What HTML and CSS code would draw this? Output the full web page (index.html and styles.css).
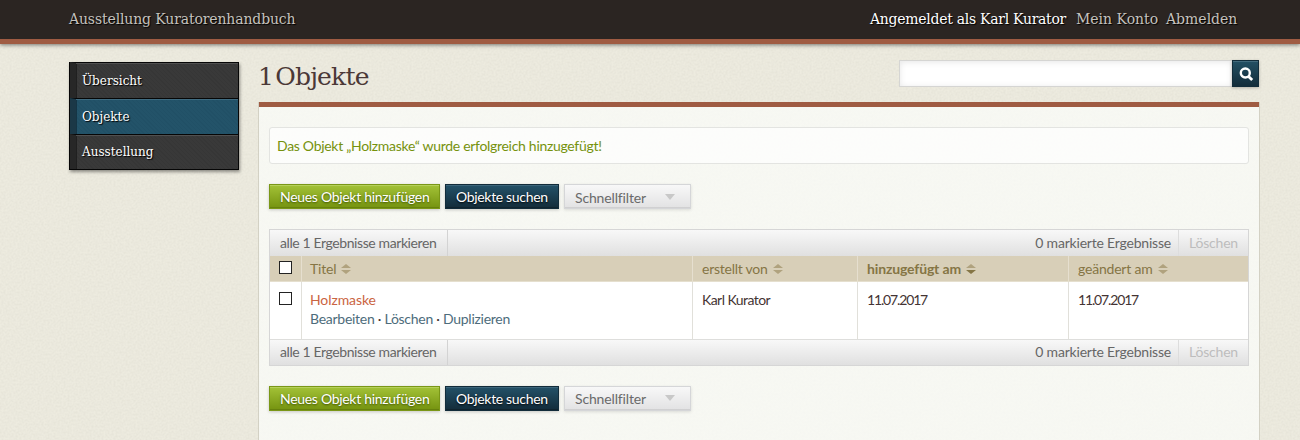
FILE: index.html
```
<!DOCTYPE html>
<html lang="de">
<head>
<meta charset="utf-8">
<title>Ausstellung Kuratorenhandbuch</title>
<link rel="stylesheet" href="styles.css">
</head>
<body>
<header class="topbar">
  <a class="site-title">Ausstellung Kuratorenhandbuch</a>
  <nav class="user-nav"><span class="user-name">Angemeldet als Karl Kurator</span><a class="account">Mein Konto</a><a class="logout">Abmelden</a></nav>
</header>
<div class="page">
  <nav class="side-nav">
    <a class="side-item"><span class="side-uebersicht">Übersicht</span></a>
    <a class="side-item active"><span class="side-objekte">Objekte</span></a>
    <a class="side-item"><span class="side-ausstellung">Ausstellung</span></a>
  </nav>
  <main class="main">
    <div class="heading-row">
      <h1 class="heading">1 Objekte</h1>
      <form class="search">
        <input class="search-input" type="text" aria-label="Suche">
        <button class="search-button" type="button" aria-label="Suchen"><svg width="15" height="15" viewBox="0 0 15 15" fill="none" stroke="#fff"><circle cx="6.3" cy="6" r="4.5" stroke-width="2.4"/><path d="M9.3 9.2L13.2 13.1" stroke-width="2.8"/></svg></button>
      </form>
    </div>
    <section class="panel">
      <div class="message"><span class="message-text">Das Objekt „Holzmaske“ wurde erfolgreich hinzugefügt!</span></div>
      <div class="actions">
        <a class="button green"><span class="label-add">Neues Objekt hinzufügen</span></a>
        <a class="button blue"><span class="label-search">Objekte suchen</span></a>
        <a class="button filter"><span class="label-filter">Schnellfilter</span><i class="caret"></i></a>
      </div>
      <div class="results">
        <div class="bulk">
          <span class="bulk-all"><span class="t-all">alle 1 Ergebnisse markieren</span></span>
          <span class="bulk-count"><span class="t-count">0 markierte Ergebnisse</span></span>
          <span class="bulk-delete"><span class="t-delete">Löschen</span></span>
        </div>
        <div class="row head">
          <div class="cell check"><i class="box"></i></div>
          <div class="cell"><span class="t-titel">Titel</span><svg class="sort" width="10" height="10" viewBox="0 0 10 10"><path d="M0 4L5 0L10 4ZM0 6L5 10L10 6Z"/></svg></div>
          <div class="cell"><span class="t-von">erstellt von</span><svg class="sort" width="10" height="10" viewBox="0 0 10 10"><path d="M0 4L5 0L10 4ZM0 6L5 10L10 6Z"/></svg></div>
          <div class="cell"><b class="t-hinzu">hinzugefügt am</b><svg class="sort" width="10" height="10" viewBox="0 0 10 10"><path d="M0 4L5 0L10 4Z"/><path class="sorted" d="M0 6L5 10L10 6Z"/></svg></div>
          <div class="cell"><span class="t-geaendert">geändert am</span><svg class="sort" width="10" height="10" viewBox="0 0 10 10"><path d="M0 4L5 0L10 4ZM0 6L5 10L10 6Z"/></svg></div>
        </div>
        <div class="row body">
          <div class="cell check"><i class="box"></i></div>
          <div class="cell"><a class="item-title">Holzmaske</a><div class="item-links"><a>Bearbeiten</a> · <a>Löschen</a> · <a>Duplizieren</a></div></div>
          <div class="cell"><span class="t-karl">Karl Kurator</span></div>
          <div class="cell"><span class="t-date">11.07.2017</span></div>
          <div class="cell"><span class="t-date">11.07.2017</span></div>
        </div>
        <div class="bulk bulk-bottom">
          <span class="bulk-all"><span class="t-all">alle 1 Ergebnisse markieren</span></span>
          <span class="bulk-count"><span class="t-count">0 markierte Ergebnisse</span></span>
          <span class="bulk-delete"><span class="t-delete">Löschen</span></span>
        </div>
      </div>
      <div class="actions actions-bottom">
        <a class="button green"><span class="label-add">Neues Objekt hinzufügen</span></a>
        <a class="button blue"><span class="label-search">Objekte suchen</span></a>
        <a class="button filter"><span class="label-filter">Schnellfilter</span><i class="caret"></i></a>
      </div>
    </section>
  </main>
</div>
</body>
</html>
```
FILE: styles.css
```
* { box-sizing: border-box; }
html, body { margin: 0; }
body {
  background-color: #edebdf;
  /* paper grain */
  background-image: url("data:image/svg+xml,%3Csvg xmlns='http://www.w3.org/2000/svg' width='200' height='200'%3E%3Cfilter id='n'%3E%3CfeTurbulence type='fractalNoise' baseFrequency='.5' numOctaves='2' stitchTiles='stitch'/%3E%3CfeColorMatrix values='0 0 0 0 .5 0 0 0 0 .49 0 0 0 0 .42 .28 0 0 0 -.09'/%3E%3C/filter%3E%3Crect width='200' height='200' filter='url(%23n)'/%3E%3C/svg%3E");
  font: 14px/18px Lato, "Open Sans", sans-serif;
  color: #443433;
}
a { text-decoration: none; }
span, b, a { white-space: nowrap; }
.topbar {
  display: flex; justify-content: space-between;
  height: 44px; padding: 9px 62px 0 69px;
  background: #2b2522; border-bottom: 5px solid #9f5b42;
  box-shadow: 0 1px 4px rgba(0,0,0,.5);
  font: 14px/20px "DejaVu Serif", serif; color: #c5c2be;
  text-shadow: 1px 1px 1px #000;
}
.user-nav { display: flex; }
.user-name { color: #fff; width: 206px; letter-spacing: -.28px; }
.account { width: 90px; }
.logout { width: 72px; }
.site-title { letter-spacing: -.13px; }
.page { display: flex; padding: 0 40px 0 69px; }
.side-nav {
  width: 170px; height: 108px; margin: 18px 19px 0 0;
  border: 1px solid #060606; border-width: 0 1px 1px;
  box-shadow: 1px 2px 3px rgba(0,0,0,.4);
  font: 12px/18px "DejaVu Serif", serif; color: #fff;
  text-shadow: 1px 1px 1px #000;
}
.side-item {
  display: block; height: 36px; padding: 9px 0 0 6px;
  border-top: 1px solid #060606; border-left: 6px solid #272727;
  background: repeating-linear-gradient(45deg, #363636 0 1px, #393939 1px 3px);
  box-shadow: inset 0 1px #505050, inset 1px 0 #202020;
}
.side-item:last-child { height: 35px; padding-top: 8px; }
.side-item.active {
  border-left-color: #1b3847;
  background: repeating-linear-gradient(45deg, #215066 0 1px, #235369 1px 3px);
  box-shadow: inset 0 1px #3f6b80, inset 1px 0 #153545;
}
.main { width: 1002px; }
.heading-row { display: flex; justify-content: space-between; height: 58px; padding: 16px 1px 0 0; }
.heading { margin: 0; font: 25px/34px "DejaVu Serif", serif; letter-spacing: -.8px; word-spacing: -5px; color: #4b3837; }
.search { display: flex; width: 360px; height: 27px; margin: 0; }
.search-input {
  width: 333px; height: 27px; border: 1px solid #d5d5d3; border-right: 0;
  padding: 0 8px; background: #fff; box-shadow: inset 0 1px 6px rgba(0,0,0,.1);
}
.search-button {
  width: 27px; height: 27px; padding: 1px 0 0 1px; border: 1px solid #122c3a;
  background: linear-gradient(#235064, #122c3a);
  box-shadow: inset 0 1px #426a7c, 0 1px 3px rgba(0,0,0,.25);
  display: flex; align-items: center; justify-content: center;
}
.panel {
  height: 338px; padding: 25px 10px 0; border: solid #d3d1c4; border-width: 0 1px;
  background: linear-gradient(#9f5b42 0 5px, rgba(251,253,250,.74) 5px);
}
.message {
  height: 37px; padding: 9px 7px; border: 1px solid #e3e4e1; border-radius: 3px;
  background: rgba(255,255,255,.65); color: #76920d;
}
.message-text { letter-spacing: -.3px; }
.label-add { letter-spacing: -.3px; }
.label-search { letter-spacing: -.33px; }
.actions { display: flex; gap: 5px; margin: 20px 0; }
.actions-bottom { margin-bottom: 0; }
.button { height: 25px; padding: 3px 0 0 10px; border: 1px solid; line-height: 17px; }
.green {
  width: 171px; color: #fff; border-color: #7a9717;
  background: linear-gradient(#a3c237, #759310);
  box-shadow: inset 0 1px #b5d05b, inset 0 -1px #67820d, 0 1px 3px rgba(0,0,0,.2);
  text-shadow: 0 1px 2px #3f5200;
}
.blue {
  width: 114px; color: #fff; border-color: #122c3a;
  background: linear-gradient(#235168, #132c3a);
  box-shadow: inset 0 1px #3c657a, inset 0 -1px #10232e, 0 1px 3px rgba(0,0,0,.2);
  text-shadow: 0 1px 2px #000;
}
.filter {
  display: flex; width: 127px; color: #6a6a6a; border-color: #d5d6d8;
  background: linear-gradient(#f8f8f8, #e2e2e3);
  box-shadow: inset 0 -1px #d0d0d1, 0 1px 3px rgba(0,0,0,.12); padding-top: 4px;
}
.actions-bottom .filter { padding-top: 3px; }
.label-filter { width: 90px; letter-spacing: -.15px; }
.caret { height: 0; margin-top: 5px; border: 5px solid transparent; border-top: 6px solid #c8c8c8; border-bottom: 0; }
.results { height: 137px; border: 1px solid #d6d6d6; }
.bulk {
  display: flex; height: 26px; line-height: 26px; color: #666;
  background: linear-gradient(#f8f8f8, #e0e0e0);
}
.bulk-bottom { height: 25px; line-height: 24px; }
.bulk-all { width: 178px; padding-left: 10px; border-right: 1px solid #d3d3d3; }
.bulk-count { flex: 1; text-align: right; padding-right: 7px; }
.bulk-delete { width: 70px; padding-left: 10px; border-left: 1px solid #ddd; color: #bdbdbd; }
.t-all { letter-spacing: -.4px; }
.t-count { letter-spacing: -.2px; }
.t-delete { letter-spacing: -.2px; }
.t-titel, .t-geaendert { letter-spacing: -.2px; }
.t-von { letter-spacing: -.25px; }
.t-hinzu { letter-spacing: -.15px; }
.t-karl { letter-spacing: -.55px; }
.t-date { letter-spacing: -1.15px; }
.row { display: grid; grid-template-columns: 32px 391px 165px 211px 1fr; }
.head { height: 26px; background: #d8cfb8; border-bottom: 1px solid #e5dfce; color: #857545; }
.body { height: 58px; background: #fff; border-bottom: 1px solid #dededc; }
.cell { border-right: 1px solid #e1e0da; padding-left: 9px; }
.head .cell { display: flex; gap: 5px; padding-top: 4px; border-right-color: #e6dfcf; }
.cell:nth-child(2) { padding-left: 8px; }
.cell:last-child { border-right: 0; }
.body .cell { padding-top: 9px; }
.box { display: block; width: 13px; height: 13px; margin-top: 1px; border: 1px solid #222; background: #fff; }
.sort { margin-top: 4px; fill: #b0a27e; }
.sorted { fill: #857545; }
.item-title { display: block; color: #ca6442; width: fit-content; letter-spacing: -.1px; }
.item-links { line-height: 19px; width: fit-content; white-space: nowrap; letter-spacing: -.27px; }
.item-links a { color: #4d6c7b; }
```
